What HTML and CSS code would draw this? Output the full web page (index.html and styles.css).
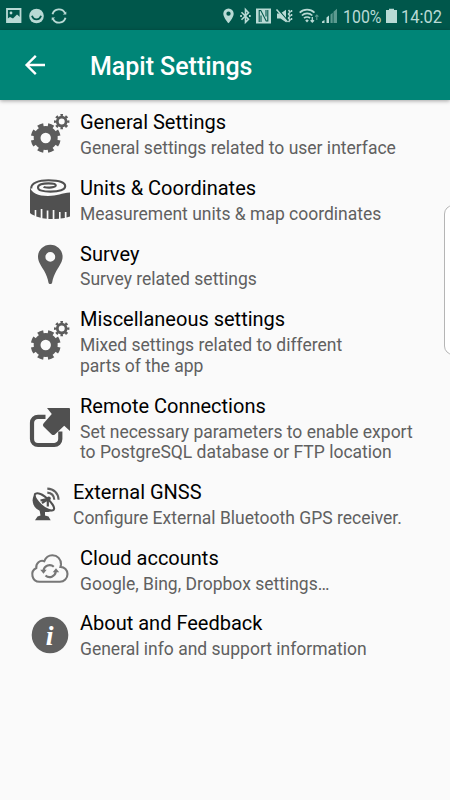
FILE: index.html
```
<!DOCTYPE html>
<html lang="en">
<head>
  <meta charset="UTF-8" />
  <meta name="viewport" content="width=device-width, initial-scale=1.0" />
  <title>Mapit Settings</title>
  <link rel="stylesheet" href="styles.css">
</head>
<body>
  <svg class="defs" width="0" height="0">
    <symbol id="gears" viewBox="0 0 40 40">
      <g fill="none" stroke="#5c5c5c">
        <circle cx="15.7" cy="24" r="8.6" stroke-width="6.8" />
        <circle cx="15.7" cy="24" r="13" stroke-width="4" pathLength="16" stroke-dasharray="1.1 .9" stroke-dashoffset="-.45" />
        <circle cx="31.7" cy="7.6" r="4.4" stroke-width="2.8" />
        <circle cx="31.7" cy="7.6" r="6.5" stroke-width="2.4" pathLength="16" stroke-dasharray="1 1" stroke-dashoffset=".5" />
      </g>
    </symbol>
  </svg>

  <div class="status-bar">
    <div class="status-left">
      <svg width="16" height="16" viewBox="0 0 16 16"><path d="M1 1h13.500v13H1z" fill="none" stroke="#b9dad5" stroke-width="1.8" /><path d="M1 11l3-2 3 1.500 4-4 3 2.500v5H1z" fill="#b9dad5" /><circle cx="5" cy="5" r="1.4" fill="#b9dad5" /></svg>
      <svg width="15" height="16" viewBox="0 0 16 16"><circle cx="8" cy="8" r="7.8" fill="#b9dad5" /><path d="M3.200 7.800c1.500 5 8.100 5 9.600 0" fill="none" stroke="#00574b" stroke-width="2" /></svg>
      <svg width="16" height="16" viewBox="0 0 16 16"><path d="M1.500 6.200A6.700 6.700 0 0 1 14 5.200M14.500 9.800A6.700 6.700 0 0 1 2 10.800" fill="none" stroke="#b9dad5" stroke-width="1.9" /><path d="M15.300 3.500v3.100h-3.500zM.7 12.500V9.400h3.500z" fill="#b9dad5" /></svg>
    </div>
    <div class="status-right">
      <svg width="11" height="16" viewBox="0 0 11 16"><path d="M5.5.5A5.2 5.2 0 0 0 .3 5.7C.3 9.5 5.5 15.3 5.5 15.3s5.2-5.8 5.2-9.6A5.2 5.2 0 0 0 5.5.5zm0 3a2.1 2.1 0 1 1 0 4.3 2.1 2.1 0 0 1 0-4.3z" fill="#b9dad5" fill-rule="evenodd" /></svg>
      <svg class="bluetooth" width="11" height="16" viewBox="0 0 11 16"><path d="M1.500 4.200l7 7L5.500 14.300V1.500l3 3.200-7 7" fill="none" stroke="#b9dad5" stroke-width="1.6" /><path d="M.2 7h1.700v2H.2zM9 7h1.700v2H9z" fill="#b9dad5" /></svg>
      <svg class="nfc" width="15" height="16" viewBox="0 0 15 16"><path d="M0 .5h15v15H0z" fill="#b9dad5" /><path d="M3.200 14V2.500h1.600l5.400 10.500h1.600V2M5 14V7.500M10 2v6.500" fill="none" stroke="#00574b" stroke-width="1.1" /></svg>
      <svg class="mute" width="17" height="16" viewBox="0 0 17 16"><path d="M1 5.500h3.500L10 1.800v12.400L4.500 10.500H1z" fill="#b9dad5" /><path d="M1.800 1l10 12" stroke="#00574b" stroke-width="1.300" /><path d="M.5 1.500l11 12.500M12.500 2l1.500 2-1.500 2 1.500 2-1.500 2 1.500 2-1.500 2M15.500 2v2M15.500 6v2M15.500 10v2" fill="none" stroke="#b9dad5" stroke-width="1.500" /></svg>
      <svg class="wifi" width="20" height="16" viewBox="0 0 20 16"><path d="M.7 4.700C4.800.7 11.400.7 15.500 4.700M2.900 7.500c2.900-2.900 7.500-2.900 10.400 0M5 10.200c1.700-1.600 4.400-1.600 6.100 0" fill="none" stroke="#b9dad5" stroke-width="1.700" /><path d="M8 11.200l1.800 1.400L8 14.500l-1.800-1.900z" fill="#b9dad5" /><path d="M13.300 9v5M11.600 12.300l1.700 1.700 1.700-1.700" fill="none" stroke="#b9dad5" stroke-width="1.300" /><path d="M17.800 12V7M16.200 8.700L17.800 7l1.600 1.700" fill="none" stroke="#5c9a90" stroke-width="1.100" /></svg>
      <svg class="signal" width="15" height="16" viewBox="0 0 15 16"><path d="M0 15v-1.500l2.500-1.500V15zM4.500 15v-5.500L7 7.500V15z" fill="#b9dad5" /><path d="M8.500 15V6.500l2.200-1.800V15zM11.500 15V3.700L15 .8V15z" fill="#5c9a90" /></svg>
      <svg class="percent" width="39" height="20" viewBox="0 0 39 20"><text x="0" y="16.500" textLength="38.500" lengthAdjust="spacingAndGlyphs">100%</text></svg>
      <svg class="battery" width="11" height="16" viewBox="0 0 11 16"><path d="M3 .8h5V2h3v13H0V2h3z" fill="#b9dad5" /></svg>
      <svg class="clock" width="42" height="20" viewBox="0 0 42 20"><text x="0" y="16.500" textLength="41" lengthAdjust="spacingAndGlyphs">14:02</text></svg>
    </div>
  </div>

  <header class="app-bar">
    <svg class="back" width="22" height="22" viewBox="0 0 22 22"><path d="M21 11H2.500M11.800 1.800L2.600 11l9.200 9.200" fill="none" stroke="#fff" stroke-width="2.400" /></svg>
    <h1>Mapit Settings</h1>
  </header>

  <main class="settings">
    <div class="item">
      <svg class="icon"><use href="#gears" /></svg>
      <div class="text"><h2>General Settings</h2><p>General settings related to user interface</p></div>
    </div>
    <div class="item">
      <svg class="icon" viewBox="0 0 40 40">
        <path d="M0 8.500C1.500 13.500 8 17 18 17c9 0 14-3 22-3.500v24l-3.500 1V33h-1.700v6l-4.200.5V33H29v6.700l-4.600.3V31h-1.700v9l-4.300-.1V31.500h-1.700v8.300l-4.300-.5V30h-1.700v8.800L6.300 37.500V31H4.700v5.700C2.800 36 1 35 0 34z" fill="#505050" />
        <path d="M1.200 9.500C1 4 8.500 1.300 18.500 1.300S35.200 3.500 35.200 7.200c0 3.600-6 5.400-14.700 5.400-7.500 0-12.500-1.400-12.500-4.200 0-2.800 4.500-4 10.500-4 5 0 7.300.8 7.300 2 0 1.500-3.500 2.300-7 2.200-3 0-4.500-.3-5-1" fill="none" stroke="#505050" stroke-width="2.100" />
      </svg>
      <div class="text"><h2>Units &amp; Coordinates</h2><p>Measurement units &amp; map coordinates</p></div>
    </div>
    <div class="item">
      <svg class="icon" viewBox="0 0 40 40"><path d="M20.300-.3C13.500-.3 8 5 8 11.700c0 5 3 8.700 6 13.800 2.200 3.700 3.800 8 4.500 12.300.3 1.700 3.300 1.700 3.600 0 .7-4.300 2.300-8.600 4.500-12.300 3-5.100 6-8.800 6-13.800C32.600 5 27.100-.3 20.300-.3zm0 7.300a4.900 4.900 0 1 1 0 9.800 4.900 4.900 0 0 1 0-9.800z" fill="#5c5c5c" fill-rule="evenodd" /></svg>
      <div class="text"><h2>Survey</h2><p>Survey related settings</p></div>
    </div>
    <div class="item">
      <svg class="icon"><use href="#gears" /></svg>
      <div class="text"><h2>Miscellaneous settings</h2><p>Mixed settings related to different<br>parts of the app</p></div>
    </div>
    <div class="item">
      <svg class="icon" viewBox="0 0 40 40">
        <path d="M15.500 8.800H8a6 6 0 0 0-6 6V31a6 6 0 0 0 6 6h16.300a6 6 0 0 0 6-6v-7.500" fill="none" stroke="#505050" stroke-width="4.200" />
        <path d="M17 0h22a1 1 0 0 1 1 1v22l-5.800-5.300-9.300 8.800q-1.600 1.200-3.200 0l-8.200-8q-1.300-1.500 0-3.100L21.800 6z" fill="#505050" />
      </svg>
      <div class="text"><h2>Remote Connections</h2><p>Set necessary parameters to enable export<br>to PostgreSQL database or FTP location</p></div>
    </div>
    <div class="item narrow">
      <svg class="icon" viewBox="0 0 33 40">
        <path d="M5.200 9.500C1.500 13.500 1.800 20.500 6.200 24.500c5 4.500 13 4.500 17.800 1.500z" fill="#505050" />
        <path d="M5.200 9.800c3-1.500 8.500 1.300 12.800 5.400s7 8.800 5.700 10.600c-2 1.800-8.300-.6-12.500-4.600S3.700 12.300 5.200 9.800z" fill="#fafafa" stroke="#505050" stroke-width="2" />
        <path d="M10.500 16.500l8.500-2M17.800 15v7.500M12 19l6-4" fill="none" stroke="#505050" stroke-width="2.200" />
        <circle cx="18.800" cy="14.500" r="2" fill="#505050" />
        <path d="M9.500 26l5.500 1.500v4l3.500 1 2.200 3.800H5l2.500-3.800 3-1z" fill="#505050" />
        <path d="M17.300 8.600c4 .2 6.700 3 7 7.200M17.300 4.600c6.500.2 11 4.700 11.300 11.200" fill="none" stroke="#606060" stroke-width="2.100" />
      </svg>
      <div class="text"><h2>External GNSS</h2><p>Configure External Bluetooth GPS receiver.</p></div>
    </div>
    <div class="item">
      <svg class="icon" viewBox="0 0 40 40">
        <path d="M9.500 32.800A7.300 7.300 0 0 1 6.300 19c-.6-4.800 3.700-8.300 8-6.800 1.300-3.500 4.300-6 8.100-6 5 0 8.800 4 8.600 9.200-.1 1-.3 1.800-.5 2.500 4 .1 7 3.100 7 7.200 0 4.400-3.300 7.700-7.600 7.700z" fill="none" stroke="#777" stroke-width="2.100" />
        <path d="M13.500 21.500a6.200 6.200 0 0 1 10.300-3.800M25.800 22.500a6.200 6.200 0 0 1-10.300 4" fill="none" stroke="#777" stroke-width="2.200" />
        <path d="M10.200 20.800h6.500l-3.200 3.900zM22.700 23.200h6.500L26 19.300z" fill="#777" />
      </svg>
      <div class="text"><h2>Cloud accounts</h2><p>Google, Bing, Dropbox settings…</p></div>
    </div>
    <div class="item">
      <svg class="icon" viewBox="0 0 40 40"><circle cx="20" cy="20" r="18.300" fill="#606060" /><text class="info" x="19.700" y="30.300" text-anchor="middle">i</text></svg>
      <div class="text"><h2>About and Feedback</h2><p>General info and support information</p></div>
    </div>
  </main>

  <div class="edge-handle"></div>
</body>
</html>
```
FILE: styles.css
```
body {
  position: relative;
  width: 450px;
  height: 800px;
  margin: 0;
  overflow: hidden;
  background: #fafafa;
  font-family: Roboto, sans-serif;
}
svg {
  display: block;
  flex: none;
  overflow: visible;
}
.defs {
  display: none;
}
.status-bar {
  display: flex;
  justify-content: space-between;
  align-items: center;
  height: 30px;
  padding: 1px 7px 0 6px;
  box-sizing: border-box;
  background: #00574b;
}
.status-left {
  display: flex;
  gap: 7px;
}
.status-right {
  display: flex;
  align-items: center;
}
.status-right text {
  font-size: 18px;
  fill: #b9dad5;
}
.bluetooth {
  margin-left: 6px;
}
.nfc, .mute, .wifi, .percent {
  margin-left: 6px;
}
.nfc, .mute {
  margin-left: 5px;
}
.signal {
  margin-left: 3px;
}
.battery {
  margin-left: 4px;
}
.clock {
  margin-left: 4px;
}
.app-bar {
  display: flex;
  align-items: center;
  height: 70px;
  padding-left: 24px;
  box-sizing: border-box;
  background: #008577;
  box-shadow: 0 1px 4px rgba(0, 0, 0, 0.35);
}
.app-bar h1 {
  margin: 2px 0 0 44px;
  color: #fff;
  font-size: 25px;
  font-weight: 500;
  letter-spacing: -0.03px;
}
.settings {
  padding: 9px 0 0 30px;
}
.item {
  display: flex;
  align-items: center;
  margin-bottom: 16.4px;
}
.icon {
  width: 40px;
  height: 40px;
  margin-right: 10px;
}
.narrow .icon {
  width: 33px;
}
.info {
  fill: #fff;
  font: italic bold 28px "Liberation Serif", serif;
}
.item h2 {
  margin: 0 0 2.9px;
  color: #000;
  font-size: 20px;
  font-weight: 400;
  line-height: 26px;
}
.item p {
  margin: 0;
  color: #606060;
  font-size: 17.5px;
  line-height: 20.5px;
  white-space: nowrap;
}
.edge-handle {
  position: absolute;
  top: 205px;
  left: 444px;
  width: 20px;
  height: 148px;
  border: 1px solid #b5b5b5;
  border-radius: 9px;
  background: #fff;
}
```
